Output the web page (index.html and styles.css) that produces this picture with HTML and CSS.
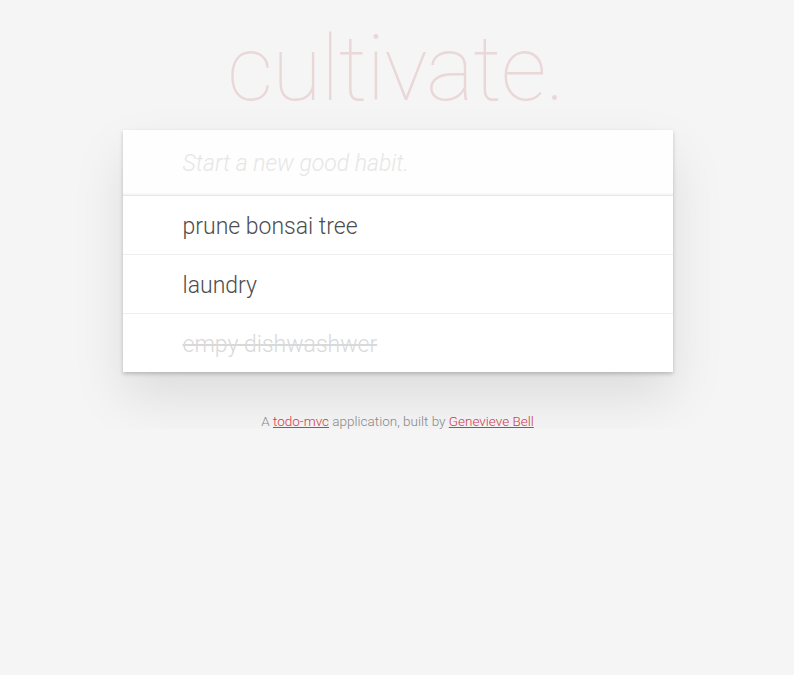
FILE: index.html
```html
<!DOCTYPE html>
<html>
<head>
<meta charset="utf-8">
<link rel="stylesheet" href="styles.css">
</head>
<body>
<section class="app">
  <header class="header">
    <h1 class="title">cultivate.</h1>
  </header>
  <div class="card">
    <input class="new-todo" placeholder="Start a new good habit." autofocus>
    <ul class="list">
      <li class="item"><label>prune bonsai tree</label></li>
      <li class="item"><label>laundry</label></li>
      <li class="item done"><label>empy dishwashwer</label></li>
    </ul>
  </div>
</section>
<footer class="info">
  <p>A <a href="#">todo-mvc</a> application, built by <a href="#">Genevieve Bell</a></p>
</footer>
</body>
</html>
```
FILE: styles.css
```css
html, body { margin: 0; padding: 0; }
body {
  background: #f5f5f5;
  font-family: Roboto, "Helvetica Neue", Helvetica, Arial, sans-serif;
  font-weight: 300;
  color: #4d4d4d;
  padding-left: 1px;
}
.app { width: 550px; margin: 0 auto; }
.header { text-align: center; }
.title {
  margin: 0;
  padding-top: 24px;
  padding-right: 4px;
  height: 130px;
  box-sizing: border-box;
  font-size: 91px;
  line-height: 91px;
  font-weight: 100;
  color: rgba(175, 47, 47, 0.15);
  letter-spacing: -1px;
}
.card {
  background: #fff;
  box-shadow: 0 2px 4px rgba(0,0,0,0.2), 0 25px 50px rgba(0,0,0,0.1);
}
.new-todo {
  display: block;
  box-sizing: border-box;
  width: 100%;
  height: 65px;
  margin: 0;
  padding: 17px 16px 15px 60px;
  border: none;
  outline: none;
  font-family: inherit;
  font-size: 23px;
  font-weight: 300;
  color: #4d4d4d;
  background: rgba(0,0,0,0.003);
  box-shadow: inset 0 -2px 1px rgba(0,0,0,0.03);
}
.new-todo::placeholder { font-style: italic; color: #e6e6e6; font-weight: 300; }
.list { list-style: none; margin: 0; padding: 0; border-top: 1px solid #e6e6e6; }
.item { border-bottom: 1px solid #ededed; height: 58px; box-sizing: border-box; display: flex; align-items: center; padding: 3px 0 0 60px; font-size: 23px; }
.item { height: 59px; }
.item:last-child { border-bottom: none; height: 58px; }
.item label { line-height: 1.2; }
.done label { color: #d9d9d9; text-decoration: line-through; }
.info {
  margin-top: 41px;
  text-align: center;
  font-size: 13.5px;
  color: #888;
}
.info p { margin: 0; }
.info a { color: #d0394b; }
```
